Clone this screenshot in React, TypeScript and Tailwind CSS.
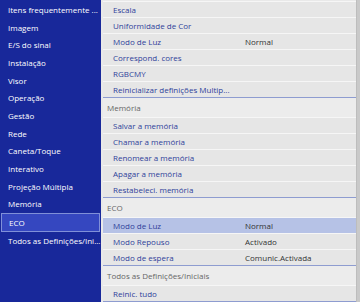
import * as React from "react";

const leftItems = [
  "Itens frequentemente ...",
  "Imagem",
  "E/S do sinal",
  "Instalação",
  "Visor",
  "Operação",
  "Gestão",
  "Rede",
  "Caneta/Toque",
  "Interativo",
  "Projeção Múltipla",
  "Memória",
  "ECO",
  "Todos as Definições/Ini...",
];

type Row = { label: string; value?: string; active?: boolean };
type Group = { title?: string; rows: Row[] };

const groups: Group[] = [
  {
    rows: [
      { label: "Escala" },
      { label: "Uniformidade de Cor" },
      { label: "Modo de Luz", value: "Normal" },
      { label: "Correspond. cores" },
      { label: "RGBCMY" },
      { label: "Reinicializar definições Multip..." },
    ],
  },
  {
    title: "Memória",
    rows: [
      { label: "Salvar a memória" },
      { label: "Chamar a memória" },
      { label: "Renomear a memória" },
      { label: "Apagar a memória" },
      { label: "Restabeleci. memória" },
    ],
  },
  {
    title: "ECO",
    rows: [
      { label: "Modo de Luz", value: "Normal", active: true },
      { label: "Modo Repouso", value: "Activado" },
      { label: "Modo de espera", value: "Comunic.Activada" },
    ],
  },
  {
    title: "Todos as Definições/Iniciais",
    rows: [{ label: "Reinic. tudo" }],
  },
];

export default function App() {
  return (
    <div
      className="flex h-[302px] w-[360px] overflow-hidden bg-[#e9e9e9] text-[8px]"
      style={{ fontFamily: '"Open Sans", "Noto Sans", sans-serif' }}
    >
      <div className="w-[101px] shrink-0 bg-[#18289a] pt-[1px]">
        {leftItems.map((item) =>
          item === "ECO" ? (
            <div
              key={item}
              className="mx-[1px] flex h-[19px] items-center border border-[#8090d8] bg-[#3547c0] pl-[7px] text-white"
            >
              {item}
            </div>
          ) : (
            <div
              key={item}
              className="flex h-[17.7px] items-center whitespace-nowrap pl-[8px] text-white"
            >
              {item}
            </div>
          )
        )}
      </div>
      <div className="flex flex-1 flex-col pl-[2px] pt-[1px]">
        {groups.map((g, gi) => (
          <div key={gi} className="flex flex-col border-b border-[#8e9cd0]">
            {g.title && (
              <div className="flex h-[19px] items-center bg-[#ececec] pl-[4px] text-[#666]">
                {g.title}
              </div>
            )}
            {g.rows.map((r) => (
              <div
                key={r.label + gi}
                className={
                  "flex h-[16px] items-center border-t border-[#f6f6f6] pl-[10px] " +
                  (r.active ? "bg-[#b6c2e6]" : "bg-[#e6e6e6]")
                }
              >
                <span className="w-[132px] shrink-0 whitespace-nowrap text-[#2f3f9a]">
                  {r.label}
                </span>
                {r.value && <span className="text-[#333]">{r.value}</span>}
              </div>
            ))}
          </div>
        ))}
      </div>
      <div className="w-[4px] shrink-0 border-l border-[#bdbdbd] bg-[#c9c9c9]" />
    </div>
  );
}
